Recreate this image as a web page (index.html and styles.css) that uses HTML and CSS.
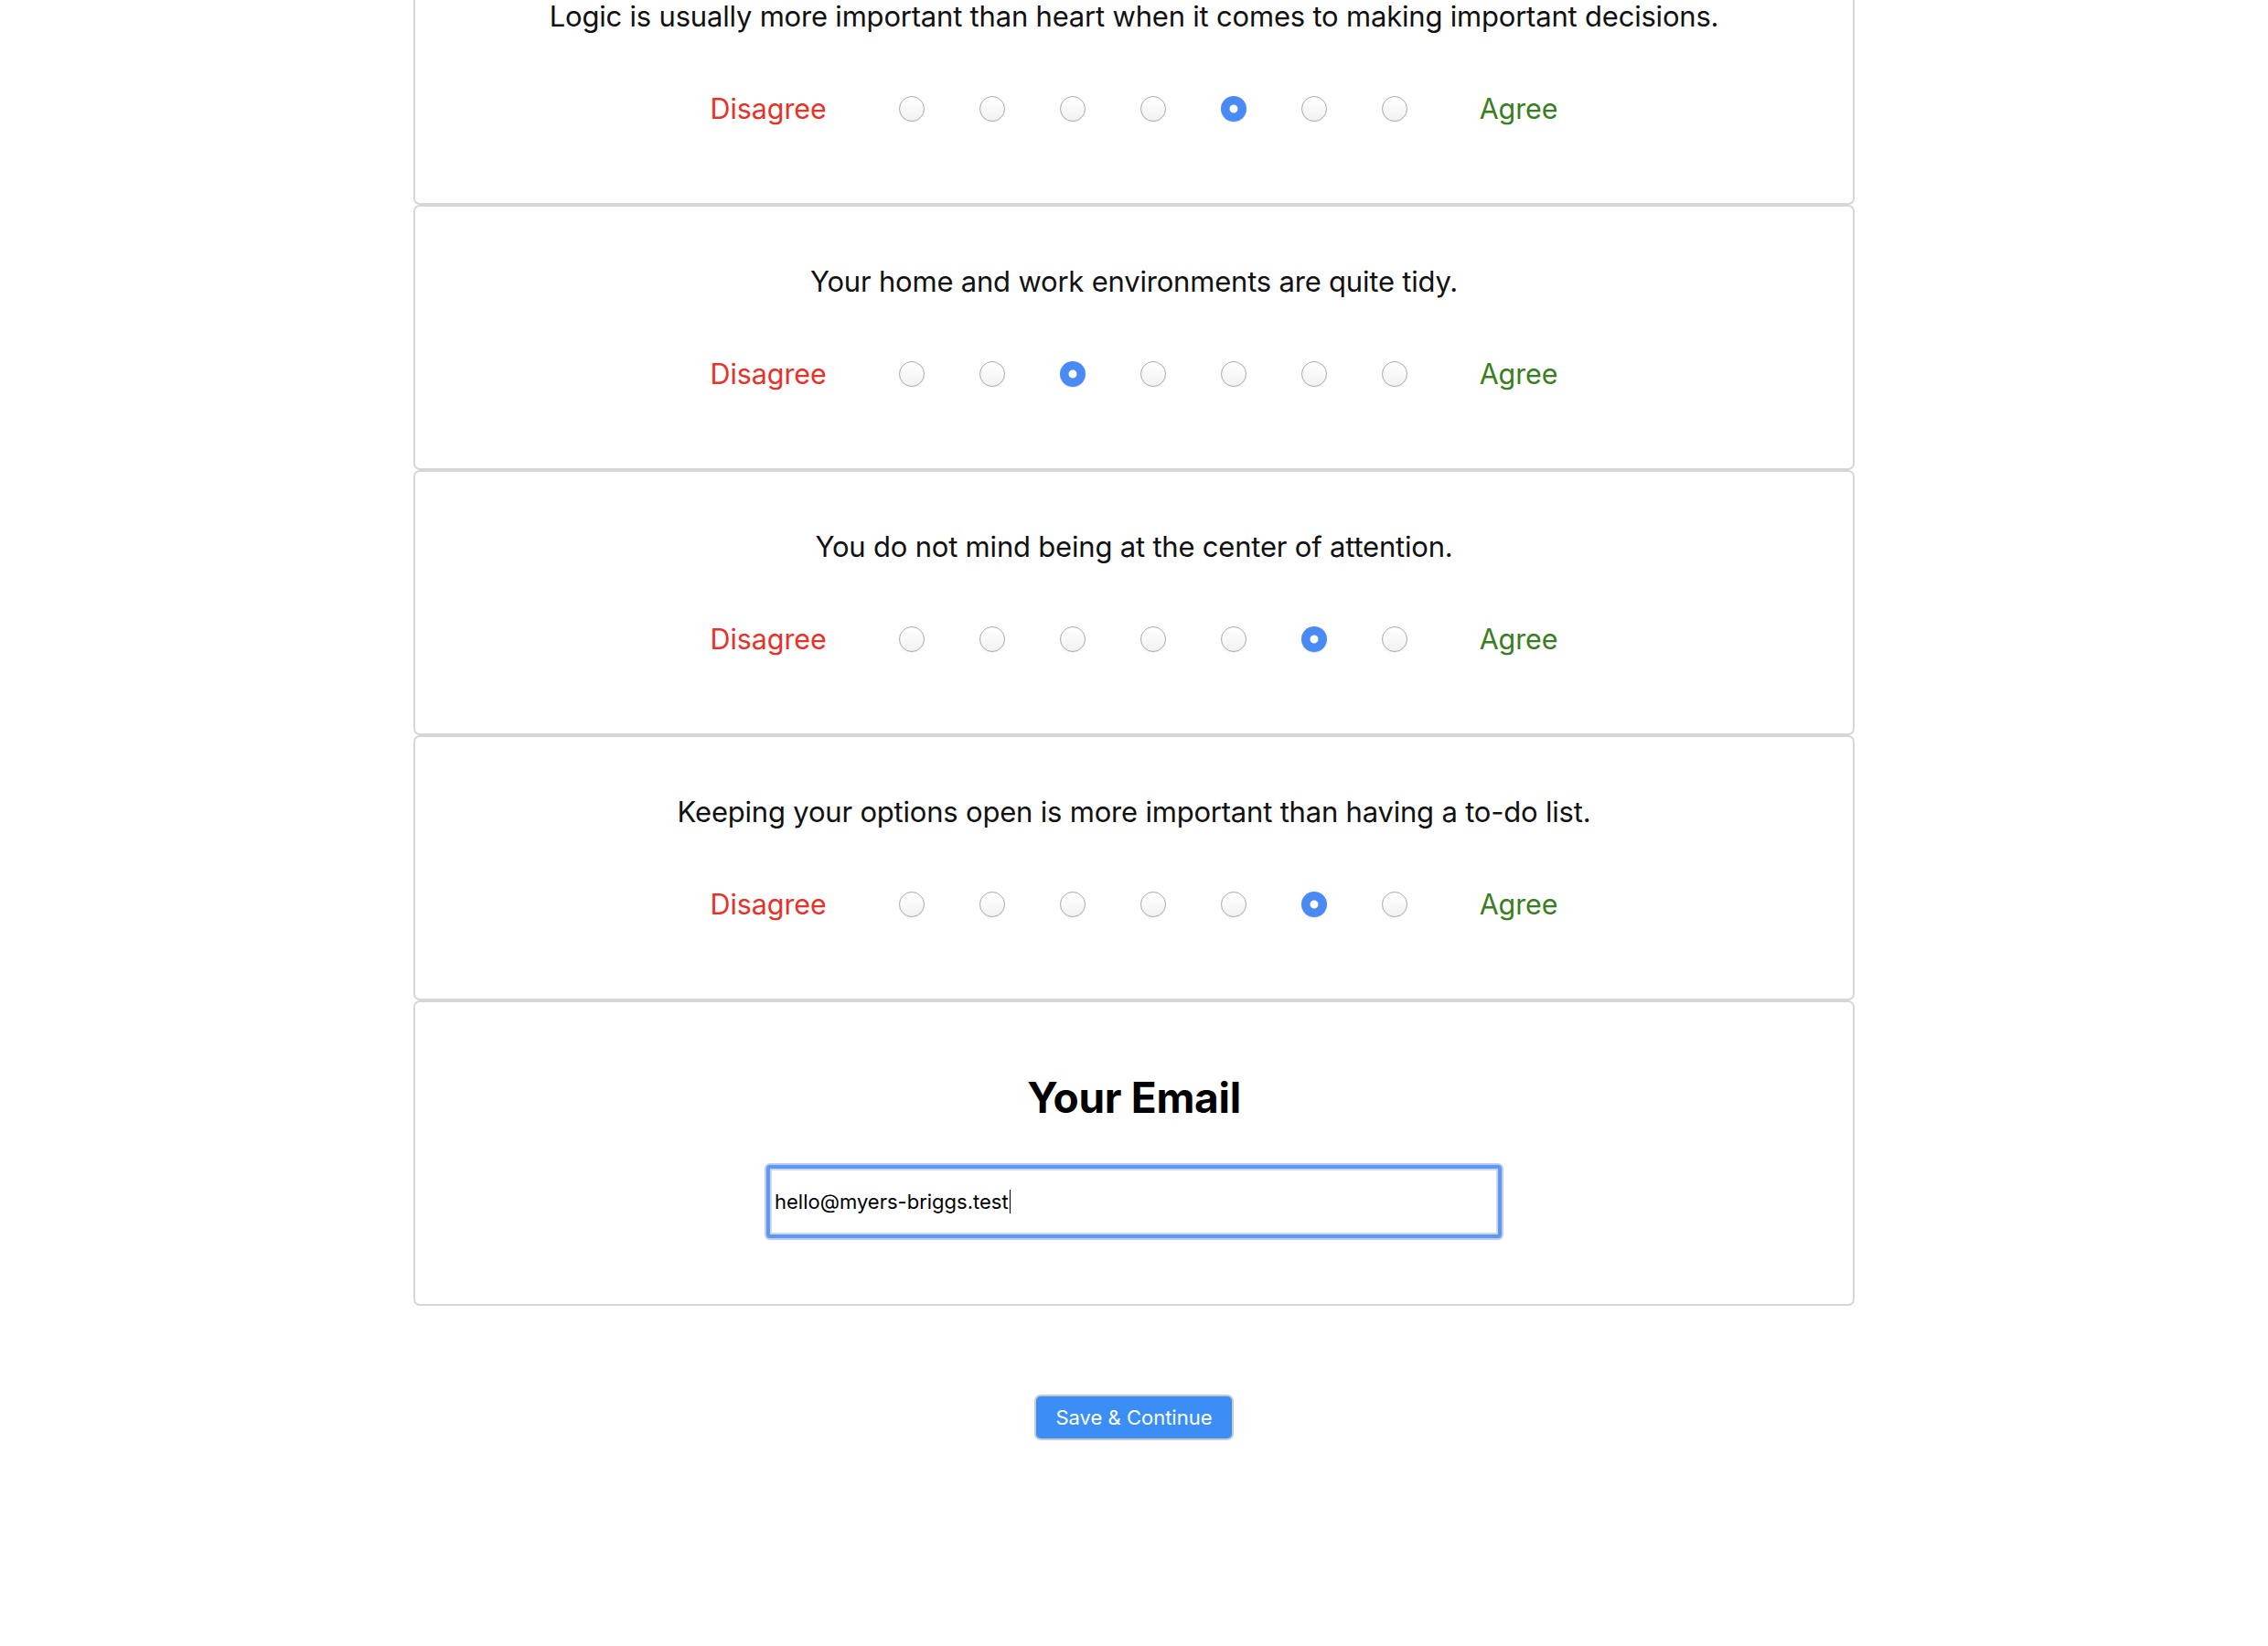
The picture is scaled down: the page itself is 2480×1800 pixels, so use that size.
FILE: index.html
```html
<!DOCTYPE html>
<html lang="en">
<head>
<meta charset="utf-8">
<title>Personality Test</title>
<link rel="stylesheet" href="styles.css">
</head>
<body>
<main class="page">
  <form class="quiz">
    <section class="card question">
      <p class="q-text">Logic is usually more important than heart when it comes to making important decisions.</p>
      <div class="scale">
        <span class="lbl lbl-dis">Disagree</span>
        <input type="radio" name="q1" class="radio">
        <input type="radio" name="q1" class="radio">
        <input type="radio" name="q1" class="radio">
        <input type="radio" name="q1" class="radio">
        <input type="radio" name="q1" class="radio" checked>
        <input type="radio" name="q1" class="radio">
        <input type="radio" name="q1" class="radio">
        <span class="lbl lbl-agr">Agree</span>
      </div>
    </section>
    <section class="card question">
      <p class="q-text">Your home and work environments are quite tidy.</p>
      <div class="scale">
        <span class="lbl lbl-dis">Disagree</span>
        <input type="radio" name="q2" class="radio">
        <input type="radio" name="q2" class="radio">
        <input type="radio" name="q2" class="radio" checked>
        <input type="radio" name="q2" class="radio">
        <input type="radio" name="q2" class="radio">
        <input type="radio" name="q2" class="radio">
        <input type="radio" name="q2" class="radio">
        <span class="lbl lbl-agr">Agree</span>
      </div>
    </section>
    <section class="card question">
      <p class="q-text">You do not mind being at the center of attention.</p>
      <div class="scale">
        <span class="lbl lbl-dis">Disagree</span>
        <input type="radio" name="q3" class="radio">
        <input type="radio" name="q3" class="radio">
        <input type="radio" name="q3" class="radio">
        <input type="radio" name="q3" class="radio">
        <input type="radio" name="q3" class="radio">
        <input type="radio" name="q3" class="radio" checked>
        <input type="radio" name="q3" class="radio">
        <span class="lbl lbl-agr">Agree</span>
      </div>
    </section>
    <section class="card question">
      <p class="q-text">Keeping your options open is more important than having a to-do list.</p>
      <div class="scale">
        <span class="lbl lbl-dis">Disagree</span>
        <input type="radio" name="q4" class="radio">
        <input type="radio" name="q4" class="radio">
        <input type="radio" name="q4" class="radio">
        <input type="radio" name="q4" class="radio">
        <input type="radio" name="q4" class="radio">
        <input type="radio" name="q4" class="radio" checked>
        <input type="radio" name="q4" class="radio">
        <span class="lbl lbl-agr">Agree</span>
      </div>
    </section>
    <section class="card email-card">
      <h2 class="email-title">Your Email</h2>
      <div class="email-field">hello@myers-briggs.test<span class="caret"></span></div>
    </section>
    <div class="actions">
      <button type="button" class="btn">Save &amp; Continue</button>
    </div>
  </form>
</main>
</body>
</html>
```

FILE: styles.css
```css
html, body {
  margin: 0;
  padding: 0;
  background: #ffffff;
}

body {
  font-family: Inter, "Noto Sans", "Liberation Sans", sans-serif;
  color: #111111;
}

.page {
  width: 1576px;
  margin: -66px auto 0;
}

.quiz {
  display: flex;
  flex-direction: column;
}

.card {
  box-sizing: border-box;
  border: 2px solid #d6d6d6;
  border-radius: 7px;
  background: #ffffff;
  display: flex;
  flex-direction: column;
  align-items: center;
}

.question {
  height: 290px;
  padding-top: 63px;
}

.q-text {
  margin: 0;
  font-size: 31px;
  line-height: 38px;
  color: #111111;
  letter-spacing: -0.2px;
}

.scale {
  display: flex;
  align-items: center;
  height: 40px;
  margin-top: 62px;
}

.lbl {
  font-size: 30.5px;
  line-height: 40px;
  letter-spacing: -0.1px;
}

.lbl-dis {
  color: #e5332a;
  margin-right: 49px;
}

.lbl-agr {
  color: #3a7d22;
  margin-left: 49px;
}

.radio {
  appearance: none;
  -webkit-appearance: none;
  box-sizing: border-box;
  width: 28px;
  height: 28px;
  margin: 0 30px;
  border-radius: 50%;
  border: 1.5px solid #ababab;
  background: linear-gradient(#ffffff, #f2f2f2);
  box-shadow: 0 0.5px 1px rgba(0, 0, 0, 0.12);
}

.radio:checked {
  border: none;
  background: #ffffff;
  box-shadow: inset 0 0 0 9.5px #4a8af4, 0 1px 1px rgba(0, 0, 0, 0.1);
}

.email-card {
  padding: 76px 0 72px;
}

.email-title {
  margin: 0;
  font-size: 46px;
  line-height: 56px;
  font-weight: 700;
  color: #000000;
  letter-spacing: -0.3px;
}

.email-field {
  box-sizing: border-box;
  width: 804px;
  height: 80px;
  margin-top: 46px;
  border: 4px solid #6596ef;
  border-radius: 4px;
  box-shadow: 0 0 0 2px #b6cdf7, inset 0 0 0 2px #c9daf9;
  padding: 0 5px;
  display: flex;
  align-items: center;
  font-size: 22px;
  color: #000000;
  background: #ffffff;
}

.caret {
  display: inline-block;
  width: 1.5px;
  height: 26px;
  background: #000000;
  margin-left: 1px;
}

.actions {
  display: flex;
  justify-content: center;
  margin-top: 97px;
}

.btn {
  box-sizing: border-box;
  width: 218px;
  height: 50px;
  border: 2px solid #c9c9c9;
  border-radius: 7px;
  background: #3a8ef6;
  color: #ffffff;
  font-family: Inter, "Noto Sans", "Liberation Sans", sans-serif;
  font-size: 22px;
  padding: 0;
}
```
